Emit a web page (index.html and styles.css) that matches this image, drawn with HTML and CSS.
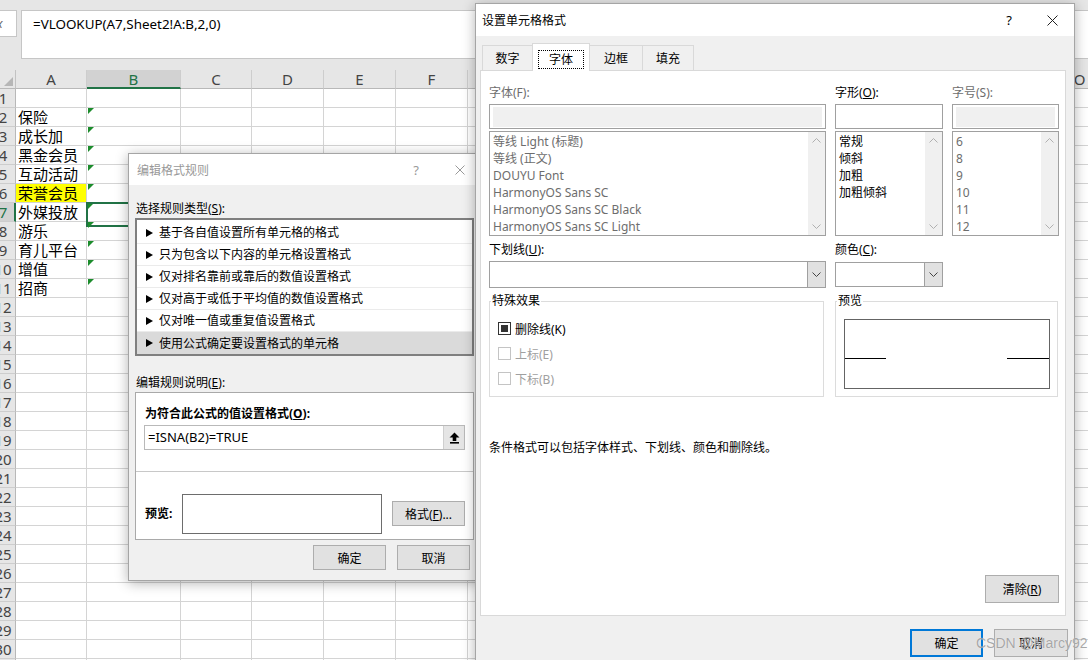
FILE: index.html
```html
<!DOCTYPE html>
<html lang="zh-CN">
<head>
<meta charset="utf-8">
<title>Excel</title>
<link rel="stylesheet" href="styles.css">
</head>
<body>
<div class="app">
  <div class="fbar">
    <div class="namebox"><span class="fx">fx</span></div>
    <div class="formula">=VLOOKUP(A7,Sheet2!A:B,2,0)</div>
  </div>
  <div class="sheet">
    <div class="hrow">
      <div class="corner"></div>
      <div class="ch w71">A</div><div class="ch w94 sel">B</div><div class="ch w71">C</div><div class="ch w72">D</div><div class="ch w72">E</div><div class="ch w72">F</div><div class="ch w72">G</div><div class="ch w72">H</div><div class="ch w72">I</div><div class="ch w72">J</div><div class="ch w72">K</div><div class="ch w72">L</div><div class="ch w72">M</div><div class="ch w72">N</div><div class="ch w72">O</div>
    </div>
    <div class="row"><div class="rh"><span>1</span></div><div class="ca"></div><div class="cb"></div><div class="rest"></div></div>
    <div class="row"><div class="rh"><span>2</span></div><div class="ca">保险</div><div class="cb err"></div><div class="rest"></div></div>
    <div class="row"><div class="rh"><span>3</span></div><div class="ca">成长加</div><div class="cb err"></div><div class="rest"></div></div>
    <div class="row"><div class="rh"><span>4</span></div><div class="ca">黑金会员</div><div class="cb err"></div><div class="rest"></div></div>
    <div class="row"><div class="rh"><span>5</span></div><div class="ca">互动活动</div><div class="cb err"></div><div class="rest"></div></div>
    <div class="row"><div class="rh"><span>6</span></div><div class="ca hl">荣誉会员</div><div class="cb err"></div><div class="rest"></div></div>
    <div class="row"><div class="rh on"><span>7</span></div><div class="ca">外媒投放</div><div class="cb err sel"></div><div class="rest"></div></div>
    <div class="row"><div class="rh"><span>8</span></div><div class="ca">游乐</div><div class="cb err"></div><div class="rest"></div></div>
    <div class="row"><div class="rh"><span>9</span></div><div class="ca">育儿平台</div><div class="cb err"></div><div class="rest"></div></div>
    <div class="row"><div class="rh"><span>10</span></div><div class="ca">增值</div><div class="cb err"></div><div class="rest"></div></div>
    <div class="row"><div class="rh"><span>11</span></div><div class="ca">招商</div><div class="cb err"></div><div class="rest"></div></div>
    <div class="row"><div class="rh"><span>12</span></div><div class="ca"></div><div class="cb"></div><div class="rest"></div></div>
    <div class="row"><div class="rh"><span>13</span></div><div class="ca"></div><div class="cb"></div><div class="rest"></div></div>
    <div class="row"><div class="rh"><span>14</span></div><div class="ca"></div><div class="cb"></div><div class="rest"></div></div>
    <div class="row"><div class="rh"><span>15</span></div><div class="ca"></div><div class="cb"></div><div class="rest"></div></div>
    <div class="row"><div class="rh"><span>16</span></div><div class="ca"></div><div class="cb"></div><div class="rest"></div></div>
    <div class="row"><div class="rh"><span>17</span></div><div class="ca"></div><div class="cb"></div><div class="rest"></div></div>
    <div class="row"><div class="rh"><span>18</span></div><div class="ca"></div><div class="cb"></div><div class="rest"></div></div>
    <div class="row"><div class="rh"><span>19</span></div><div class="ca"></div><div class="cb"></div><div class="rest"></div></div>
    <div class="row"><div class="rh"><span>20</span></div><div class="ca"></div><div class="cb"></div><div class="rest"></div></div>
    <div class="row"><div class="rh"><span>21</span></div><div class="ca"></div><div class="cb"></div><div class="rest"></div></div>
    <div class="row"><div class="rh"><span>22</span></div><div class="ca"></div><div class="cb"></div><div class="rest"></div></div>
    <div class="row"><div class="rh"><span>23</span></div><div class="ca"></div><div class="cb"></div><div class="rest"></div></div>
    <div class="row"><div class="rh"><span>24</span></div><div class="ca"></div><div class="cb"></div><div class="rest"></div></div>
    <div class="row"><div class="rh"><span>25</span></div><div class="ca"></div><div class="cb"></div><div class="rest"></div></div>
    <div class="row"><div class="rh"><span>26</span></div><div class="ca"></div><div class="cb"></div><div class="rest"></div></div>
    <div class="row"><div class="rh"><span>27</span></div><div class="ca"></div><div class="cb"></div><div class="rest"></div></div>
    <div class="row"><div class="rh"><span>28</span></div><div class="ca"></div><div class="cb"></div><div class="rest"></div></div>
    <div class="row"><div class="rh"><span>29</span></div><div class="ca"></div><div class="cb"></div><div class="rest"></div></div>
    <div class="row"><div class="rh"><span>30</span></div><div class="ca"></div><div class="cb"></div><div class="rest"></div></div>
    <div class="row"><div class="rh"><span>31</span></div><div class="ca"></div><div class="cb"></div><div class="rest"></div></div>
  </div>

  <div class="dlg dlg-rule">
    <div class="tbar inactive">
      <span class="ttl">编辑格式规则</span>
      <span class="q">?</span>
      <svg class="x" width="10" height="10" viewBox="0 0 10 10"><path d="M0.5 0.5 L9.5 9.5 M9.5 0.5 L0.5 9.5" stroke="#999" stroke-width="1" fill="none"/></svg>
    </div>
    <div class="rbody">
      <div class="lbl lbl-s">选择规则类型(<u>S</u>):</div>
      <ul class="rlist">
        <li><i class="tri"></i>基于各自值设置所有单元格的格式</li>
        <li><i class="tri"></i>只为包含以下内容的单元格设置格式</li>
        <li><i class="tri"></i>仅对排名靠前或靠后的数值设置格式</li>
        <li><i class="tri"></i>仅对高于或低于平均值的数值设置格式</li>
        <li><i class="tri"></i>仅对唯一值或重复值设置格式</li>
        <li class="on"><i class="tri"></i>使用公式确定要设置格式的单元格</li>
      </ul>
      <div class="lbl lbl-e">编辑规则说明(<u>E</u>):</div>
      <div class="grp">
        <div class="grp-top">
          <div class="blbl">为符合此公式的值设置格式(<u>O</u>):</div>
          <div class="finput">
            <span class="ftext">=ISNA(B2)=TRUE</span>
            <span class="upbtn"><svg width="11" height="12" viewBox="0 0 11 12"><path d="M5.5 0.5 L10.5 5.5 H7.3 V9 H3.7 V5.5 H0.5 Z" fill="#000"/><rect x="1" y="10" width="9" height="1.6" fill="#000"/></svg></span>
          </div>
        </div>
        <div class="grp-bot">
          <span class="blbl pv">预览:</span>
          <div class="pvbox"></div>
          <button class="btn btn-fmt">格式(<u>F</u>)...</button>
        </div>
      </div>
      <div class="btns">
        <button class="btn">确定</button>
        <button class="btn">取消</button>
      </div>
    </div>
  </div>

  <div class="dlg dlg-fmt">
    <div class="tbar">
      <span class="ttl">设置单元格格式</span>
      <span class="q">?</span>
      <svg class="x" width="11" height="11" viewBox="0 0 11 11"><path d="M0.5 0.5 L10.5 10.5 M10.5 0.5 L0.5 10.5" stroke="#222" stroke-width="1" fill="none"/></svg>
    </div>
    <div class="tabs">
      <span class="tab t1">数字</span>
      <span class="tab t2 on"><span class="focus">字体</span></span>
      <span class="tab t3">边框</span>
      <span class="tab t4">填充</span>
    </div>
    <div class="panel">
      <div class="prow">
        <div class="pcol c1">
          <div class="plbl dim">字体(F):</div>
          <div class="ibox dis"><div class="fill"></div></div>
          <div class="lbox">
            <ul class="items dim">
              <li>等线 Light (标题)</li>
              <li>等线 (正文)</li>
              <li>DOUYU Font</li>
              <li>HarmonyOS Sans SC</li>
              <li>HarmonyOS Sans SC Black</li>
              <li>HarmonyOS Sans SC Light</li>
            </ul>
            <div class="sb">
              <svg width="9" height="5" viewBox="0 0 9 5"><path d="M0.5 4.5 L4.5 0.5 L8.5 4.5" fill="none" stroke="#b0b0b0"/></svg>
              <svg width="9" height="5" viewBox="0 0 9 5"><path d="M0.5 0.5 L4.5 4.5 L8.5 0.5" fill="none" stroke="#b0b0b0"/></svg>
            </div>
          </div>
        </div>
        <div class="pcol c2">
          <div class="plbl">字形(<u>O</u>):</div>
          <div class="ibox"></div>
          <div class="lbox">
            <ul class="items">
              <li>常规</li>
              <li>倾斜</li>
              <li>加粗</li>
              <li>加粗倾斜</li>
            </ul>
            <div class="sb">
              <svg width="9" height="5" viewBox="0 0 9 5"><path d="M0.5 4.5 L4.5 0.5 L8.5 4.5" fill="none" stroke="#b0b0b0"/></svg>
              <svg width="9" height="5" viewBox="0 0 9 5"><path d="M0.5 0.5 L4.5 4.5 L8.5 0.5" fill="none" stroke="#b0b0b0"/></svg>
            </div>
          </div>
        </div>
        <div class="pcol c3">
          <div class="plbl dim">字号(S):</div>
          <div class="ibox dis"><div class="fill"></div></div>
          <div class="lbox">
            <ul class="items dim">
              <li>6</li>
              <li>8</li>
              <li>9</li>
              <li>10</li>
              <li>11</li>
              <li>12</li>
            </ul>
            <div class="sb">
              <svg width="9" height="5" viewBox="0 0 9 5"><path d="M0.5 4.5 L4.5 0.5 L8.5 4.5" fill="none" stroke="#b0b0b0"/></svg>
              <svg width="9" height="5" viewBox="0 0 9 5"><path d="M0.5 0.5 L4.5 4.5 L8.5 0.5" fill="none" stroke="#b0b0b0"/></svg>
            </div>
          </div>
        </div>
      </div>

      <div class="prow prow2">
        <div class="pcol c1">
          <div class="plbl">下划线(<u>U</u>):</div>
          <div class="dd dd1"><span class="ddv"></span><span class="ddb"><svg width="9" height="5" viewBox="0 0 9 5"><path d="M0.5 0.5 L4.5 4.5 L8.5 0.5" fill="none" stroke="#444"/></svg></span></div>
        </div>
        <div class="pcol c2">
          <div class="plbl">颜色(<u>C</u>):</div>
          <div class="dd dd2"><span class="ddv"></span><span class="ddb"><svg width="9" height="5" viewBox="0 0 9 5"><path d="M0.5 0.5 L4.5 4.5 L8.5 0.5" fill="none" stroke="#444"/></svg></span></div>
        </div>
      </div>

      <div class="prow prow3">
        <div class="fs fs1">
          <span class="lg">特殊效果</span>
          <div class="chk"><span class="cbx checked"></span><span>删除线(K)</span></div>
          <div class="chk off"><span class="cbx"></span><span>上标(E)</span></div>
          <div class="chk off"><span class="cbx"></span><span>下标(B)</span></div>
        </div>
        <div class="fs fs2">
          <span class="lg">预览</span>
          <div class="pview"><span class="ln l1"></span><span class="ln l2"></span></div>
        </div>
      </div>

      <p class="desc">条件格式可以包括字体样式、下划线、颜色和删除线。</p>

      <button class="btn btn-clear">清除(<u>R</u>)</button>
    </div>
    <div class="fbtns">
      <button class="btn big def">确定</button>
      <button class="btn big">取消</button>
    </div>
  </div>

  <div class="watermark">CSDN @Marcy92</div>
</div>
</body>
</html>
```

FILE: styles.css
```css
* { box-sizing: border-box; margin: 0; padding: 0; }
body { margin: 0; background: #e6e6e6; font-family: "Noto Sans", "Noto Sans CJK SC", sans-serif; color: #000; }
ul { list-style: none; }
u { text-decoration: underline; }

.app { position: relative; width: 1088px; height: 660px; overflow: hidden; background: #e6e6e6; }

/* formula bar */
.fbar { display: flex; height: 70px; padding-top: 10px; }
.namebox { flex: none; width: 17px; height: 27px; background: #fff; border: 1px solid #c6c6c6; border-left: none; overflow: hidden; display: flex; align-items: center; }
.fx { flex: none; margin-left: -7px; font-size: 12px; font-style: italic; color: #666; line-height: 12px; }
.formula { flex: 1; margin-left: 4px; height: 49px; background: #fff; border: 1px solid #c6c6c6; border-right: none; padding: 3px 11px; font-size: 13.4px; line-height: 20px; white-space: nowrap; }

/* sheet */
.sheet { display: flex; flex-direction: column; background: #fff; }
.hrow { display: flex; height: 19px; background: #e6e6e6; overflow: hidden; }
.corner { flex: none; width: 16px; border-right: 1px solid #c2c2c2; border-bottom: 1px solid #b8b8b8; position: relative; }
.corner::after { content: ""; position: absolute; right: 2px; bottom: 2px; border-bottom: 9px solid #b6b6b6; border-left: 9px solid transparent; }
.ch { flex: none; display: flex; align-items: center; justify-content: center; font-size: 15px; line-height: 18px; color: #444; border-right: 1px solid #cdcdcd; border-bottom: 1px solid #b8b8b8; }
.ch.sel { background: #d2d2d2; color: #217346; border-bottom: 2px solid #217346; }
.w71 { width: 71px; }
.w72 { width: 72px; }
.w94 { width: 94px; }

.row { display: flex; height: 19px; flex: none; }
.rh { flex: none; width: 16px; overflow: hidden; display: flex; background: #e6e6e6; border-right: 1px solid #b8b8b8; border-bottom: 1px solid #cdcdcd; }
.rh span { flex: none; width: 26px; margin-left: -10px; text-align: center; font-size: 15px; line-height: 18px; color: #444; }
.rh.on { background: #d2d2d2; border-right: 2px solid #217346; }
.rh.on span { color: #217346; }
.ca { flex: none; width: 71px; border-right: 1px solid #d4d4d4; border-bottom: 1px solid #d4d4d4; padding-left: 2px; font-family: "Noto Sans CJK SC", sans-serif; font-size: 15px; line-height: 18px; white-space: nowrap; }
.ca.hl { background: #ffff00; }
.cb { flex: none; width: 94px; border-right: 1px solid #d4d4d4; border-bottom: 1px solid #d4d4d4; position: relative; }
.cb.err::before { content: ""; position: absolute; left: 1px; top: 0; border-top: 6px solid #1c8c2c; border-right: 6px solid transparent; }
.cb.sel::after { content: ""; position: absolute; left: -1px; top: -1px; width: 96px; height: 21px; border: 2px solid #217346; }
.rest { flex: 1; border-bottom: 1px solid #d4d4d4; background: repeating-linear-gradient(to right, transparent 0 71px, #d4d4d4 71px 72px); background-position: -1px 0; }

/* dialogs */
.dlg { position: absolute; background: #f0f0f0; border: 1px solid #a5a5a5; box-shadow: 0 2px 12px rgba(0, 0, 0, 0.3); font-size: 12px; }
.tbar { height: 32px; background: #fff; display: flex; align-items: center; padding-left: 8px; padding-right: 15px; }
.tbar .ttl { flex: 1; font-size: 12px; }
.tbar .q { font-size: 13px; margin-right: 36px; }
.tbar.inactive .ttl, .tbar.inactive .q { color: #999; }
.btn { font-family: inherit; font-size: 12px; background: #e1e1e1; border: 1px solid #adadad; color: #000; width: 73px; height: 25px; padding: 0; }

/* rule dialog */
.dlg-rule { left: 128px; top: 153px; width: 353px; height: 428px; }
.dlg-rule .tbar { height: 31px; }
.rbody { padding: 16px 6px 0 6px; }
.lbl { line-height: 16px; padding-left: 1px; }
.rlist { margin-top: 1px; height: 138px; border: 2px solid #7f7f7f; background: #fff; padding-top: 2px; }
.rlist li { height: 22px; line-height: 21px; padding-left: 9px; border-bottom: 1px solid #ebebeb; display: flex; align-items: center; white-space: nowrap; }
.rlist li.on { background: #dadada; border-bottom: none; }
.tri { flex: none; width: 0; height: 0; border-left: 7px solid #000; border-top: 4px solid transparent; border-bottom: 4px solid transparent; margin-right: 6px; }
.lbl-e { margin-top: 19px; }
.grp { margin-top: 1px; height: 148px; border: 1px solid #a9a9a9; background: #fff; }
.grp-top { height: 78px; padding: 13px 8px 0 8px; }
.blbl { font-weight: bold; line-height: 16px; padding-left: 1px; }
.finput { margin-top: 3px; height: 25px; border: 1px solid #b9b9b9; display: flex; align-items: stretch; }
.ftext { flex: 1; padding-left: 3px; font-size: 13px; line-height: 23px; }
.upbtn { flex: none; width: 21px; background: #e5e5e5; border-left: 1px solid #cfcfcf; display: flex; align-items: center; justify-content: center; }
.grp-bot { border-top: 1px solid #c8c8c8; display: flex; align-items: center; padding: 21px 8px 6px 9px; height: 69px; }
.pv { width: 37px; padding-left: 0; }
.pvbox { width: 200px; height: 40px; border: 1px solid #6d6d6d; background: #fff; }
.btn-fmt { margin-left: 10px; }
.btns { display: flex; justify-content: flex-end; gap: 11px; margin-top: 5px; padding-right: 4px; }

/* format dialog */
.dlg-fmt { left: 475px; top: 3px; width: 600px; height: 672px; }
.dlg-fmt .tbar { padding-left: 6px; padding-right: 16px; }
.dlg-fmt .tbar .q { margin-right: 35px; }
.tabs { display: flex; align-items: flex-end; height: 27px; margin-top: 7px; padding-left: 6px; position: relative; z-index: 1; }
.tab { flex: none; height: 25px; border: 1px solid #d9d9d9; border-bottom: none; background: #f0f0f0; display: flex; align-items: center; justify-content: center; margin-right: -1px; font-size: 12px; }
.tab.on { height: 28px; margin-bottom: -1px; background: #fff; padding-top: 3px; }
.t1 { width: 51px; }
.t2 { width: 58px; }
.t3 { width: 54px; }
.t4 { width: 52px; }
.focus { border: 1px dotted #000; padding: 0 10px; line-height: 17px; }
.panel { margin-left: 4px; width: 586px; height: 546px; background: #fff; border: 1px solid #d9d9d9; display: flex; flex-direction: column; padding: 14px 6px 12px 8px; }
.prow { display: flex; gap: 9px; }
.pcol { flex: none; display: flex; flex-direction: column; }
.c1 { width: 337px; }
.c2 { width: 108px; }
.c3 { width: 107px; }
.plbl { line-height: 16px; }
.dim { color: #6d6d6d; }
.ibox { margin-top: 3px; height: 25px; border: 1px solid #a0a0a0; background: #fff; padding: 2px 3px 1px 3px; }
.ibox.dis .fill { height: 100%; background: #f0f0f0; }
.lbox { margin-top: 2px; height: 105px; border: 1px solid #a0a0a0; background: #fff; display: flex; }
.items { flex: 1; padding: 1px 0 0 3px; overflow: hidden; }
.items li { line-height: 17px; height: 17px; white-space: nowrap; font-size: 12px; }
.sb { flex: none; width: 17px; background: #f0f0f0; display: flex; flex-direction: column; justify-content: space-between; align-items: center; padding: 6px 0 6px; }
.prow2 { margin-top: 6px; }
.dd { display: flex; border: 1px solid #a0a0a0; background: #fff; }
.dd1 { margin-top: 3px; height: 27px; }
.dd2 { margin-top: 4px; height: 25px; }
.ddv { flex: 1; }
.ddb { flex: none; width: 18px; background: #e1e1e1; border-left: 1px solid #a0a0a0; display: flex; align-items: center; justify-content: center; }
.prow3 { margin-top: 13px; gap: 11px; }
.fs { flex: none; height: 96px; border: 1px solid #dcdcdc; }
.fs1 { width: 335px; }
.fs2 { width: 223px; }
.lg { display: block; width: fit-content; margin: -9px 0 0 1px; padding: 0 1px; background: #fff; line-height: 16px; }
.chk { display: flex; align-items: center; height: 25px; padding-left: 8px; }
.fs1 .lg + .chk { margin-top: 7px; }
.cbx { flex: none; width: 13px; height: 13px; border: 1px solid #333; margin-right: 4px; display: flex; align-items: center; justify-content: center; background: #fff; }
.cbx.checked::after { content: ""; width: 7px; height: 7px; background: #333; }
.chk.off { color: #a0a0a0; }
.chk.off .cbx { border-color: #c4c4c4; }
.pview { margin: 10px 0 0 8px; width: 206px; height: 70px; border: 1px solid #646464; display: flex; justify-content: space-between; align-items: flex-start; padding-top: 38px; }
.ln { height: 1px; background: #000; }
.l1 { width: 41px; }
.l2 { width: 42px; }
.desc { margin-top: 43px; line-height: 16px; font-size: 12px; }
.btn-clear { margin-top: auto; align-self: flex-end; height: 28px; width: 74px; }
.fbtns { display: flex; justify-content: flex-end; gap: 11px; margin-top: 13px; padding-right: 6px; }
.btn.big { height: 28px; width: 74px; }
.btn.def { border: 2px solid #0078d7; width: 73px; }

.watermark { position: absolute; left: 976px; top: 634px; font-family: "Liberation Sans", Arial, sans-serif; font-size: 14px; line-height: 18px; color: rgba(140, 140, 140, 0.75); text-shadow: 0 0 1px rgba(255,255,255,0.8); white-space: nowrap; }
```
